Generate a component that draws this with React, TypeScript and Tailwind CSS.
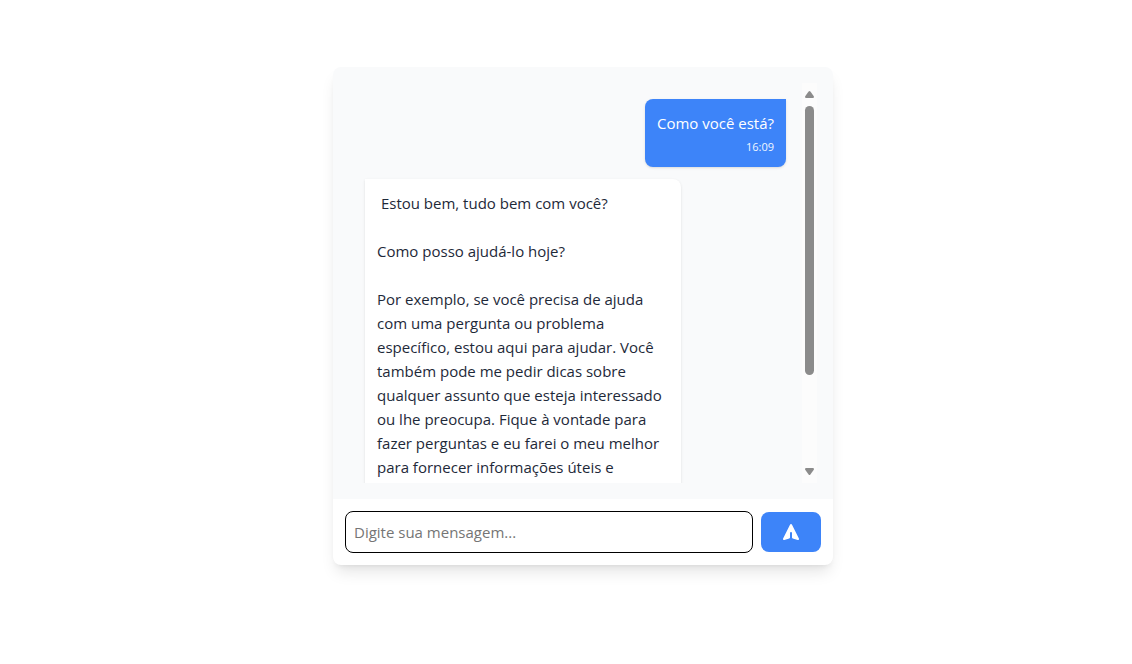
import { useState } from "react";

type Message = { id: number; mine: boolean; text: string; time?: string };

const messages: Message[] = [
  { id: 1, mine: true, text: "Como você está?", time: "16:09" },
  {
    id: 2,
    mine: false,
    text: " Estou bem, tudo bem com você?\n\nComo posso ajudá-lo hoje?\n\nPor exemplo, se você precisa de ajuda com uma pergunta ou problema específico, estou aqui para ajudar. Você também pode me pedir dicas sobre qualquer assunto que esteja interessado ou lhe preocupa. Fique à vontade para fazer perguntas e eu farei o meu melhor para fornecer informações úteis e",
  },
];

function Scrollbar() {
  return (
    <div aria-hidden="true" className="flex w-[15px] shrink-0 flex-col items-center bg-[#fcfcfc] py-2 text-[#8b8b8b]">
      <svg width="9" height="7" viewBox="0 0 9 7" fill="currentColor">
        <path d="M3.6 .6Q4.5-.5 5.4.6L8.8 5.2Q9.3 7 8 7H1Q-.3 7 .2 5.2Z" />
      </svg>
      <div className="flex w-[9px] flex-1 flex-col pt-2 pb-1">
        <div className="h-3/4 rounded-full bg-[#8b8b8b]" />
      </div>
      <svg width="9" height="7" viewBox="0 0 9 7" fill="currentColor">
        <path d="M3.6 6.4Q4.5 7.5 5.4 6.4L8.8 1.8Q9.3 0 8 0H1Q-.3 0 .2 1.8Z" />
      </svg>
    </div>
  );
}

export default function App() {
  const [draft, setDraft] = useState("");
  return (
    <div className="flex min-h-screen items-center justify-center bg-white pb-8 pl-[34px] font-['Open_Sans',sans-serif] text-[15px] leading-6 text-gray-800">
      <main className="w-full max-w-[500px] overflow-hidden rounded-lg bg-white shadow-lg">
        <section aria-label="Mensagens" className="bg-gray-50 p-4">
          <div className="flex h-[400px]">
            <div className="flex min-w-0 flex-1 flex-col gap-3 overflow-y-auto p-4 [scrollbar-width:none]">
              {messages.map((m) => (
                <div
                  key={m.id}
                  className={
                    m.mine
                      ? "max-w-3/4 shrink-0 self-end rounded-lg rounded-tr-none bg-[#3d84f9] p-3 text-white shadow-sm"
                      : "max-w-3/4 shrink-0 self-start rounded-lg rounded-tl-none bg-white p-3 shadow-sm"
                  }
                >
                  <p className="whitespace-pre-wrap">{m.text}</p>
                  {m.time && <p className="mt-1 text-right text-[11px] leading-4 text-blue-50">{m.time}</p>}
                </div>
              ))}
            </div>
            <Scrollbar />
          </div>
        </section>
        <form className="flex items-center gap-2 p-3" onSubmit={(e) => e.preventDefault()}>
          <input
            type="text"
            aria-label="Mensagem"
            placeholder="Digite sua mensagem..."
            value={draft}
            onChange={(e) => setDraft(e.target.value)}
            className="min-w-0 flex-1 rounded-lg border border-black p-2 outline-none placeholder:text-[#757575]"
          />
          <button type="submit" aria-label="Enviar" className="flex h-10 w-15 items-center justify-center rounded-lg bg-[#3d84f9] text-white">
            <svg width="20" height="20" viewBox="0 0 20 20" fill="currentColor">
              <path d="M10.894 2.553a1 1 0 00-1.788 0l-7 14a1 1 0 001.169 1.409l5-1.429A1 1 0 009 15.571V11a1 1 0 112 0v4.571a1 1 0 00.725.962l5 1.428a1 1 0 001.17-1.408l-7-14z" />
            </svg>
          </button>
        </form>
      </main>
    </div>
  );
}
